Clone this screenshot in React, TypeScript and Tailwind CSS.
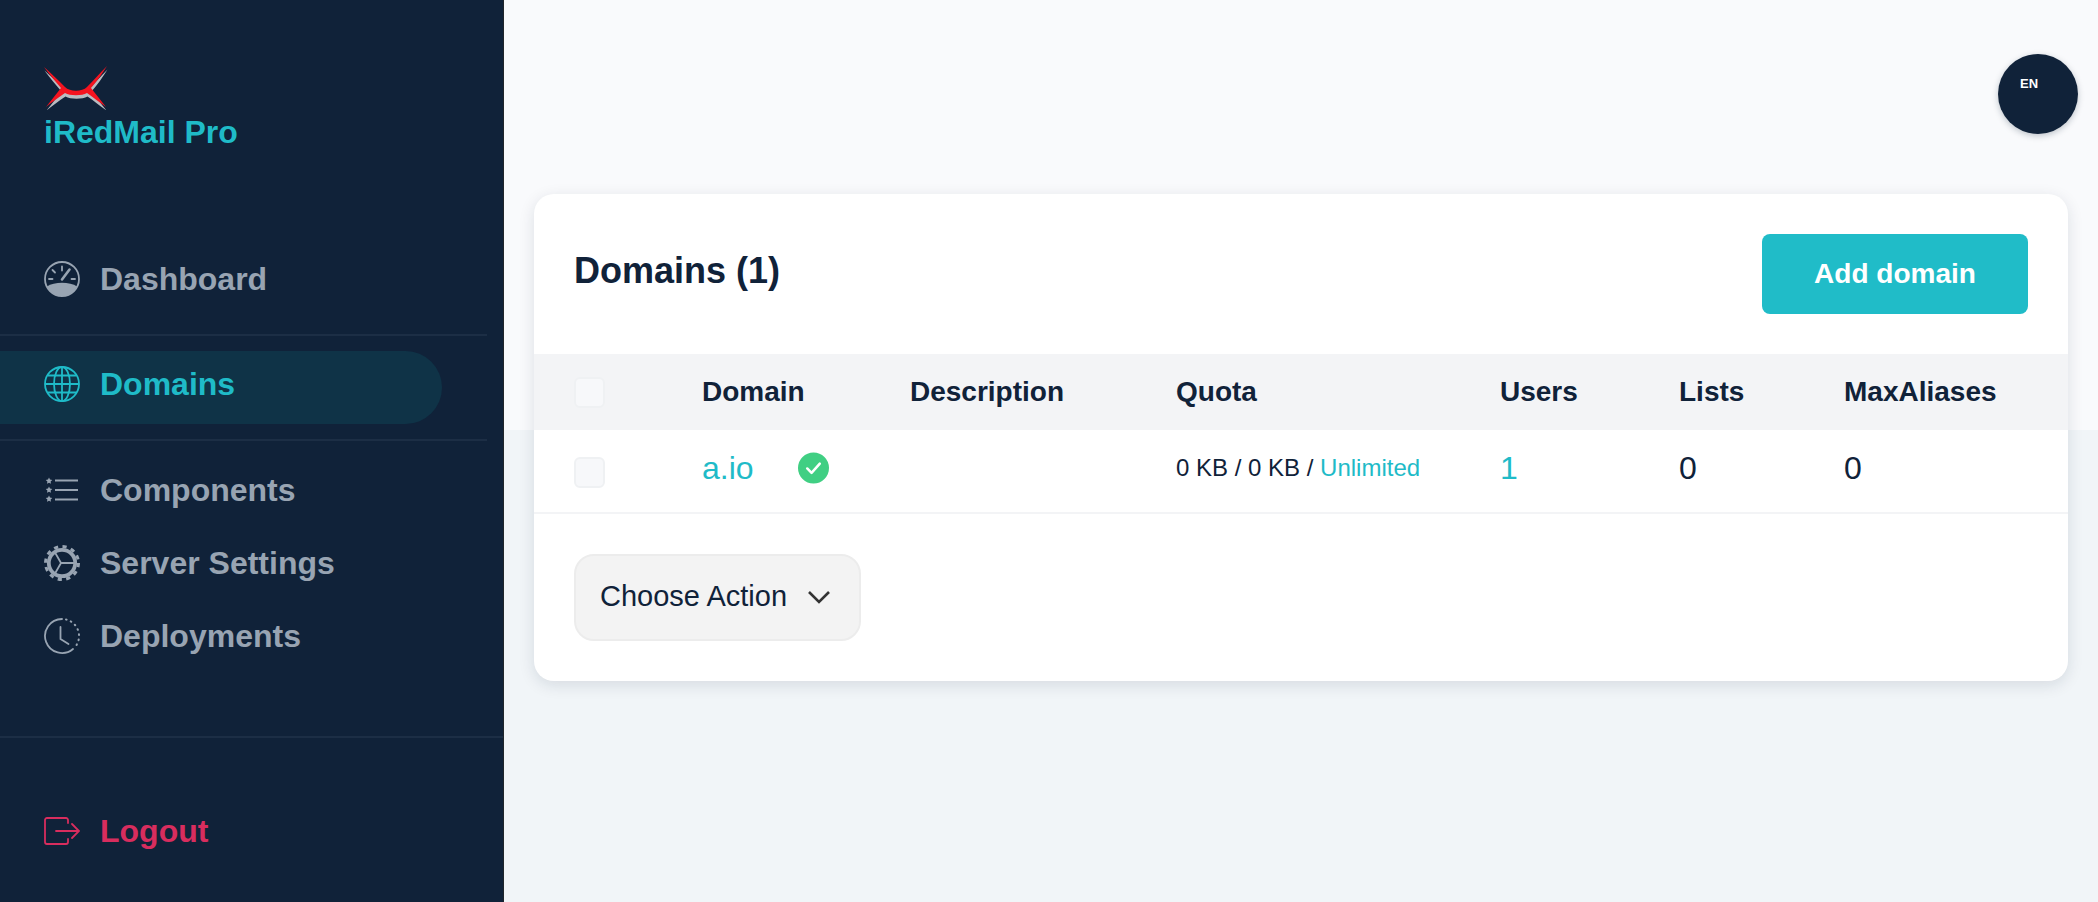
import React from "react";

const logoPath =
  "M0 1C7 7 14 14 21 21C26 26 38 26 43 21C50 14 56 7 63 0C58 8 53 15 47 22C52 28 57 35 62 41C55 36 49 31 43 27C38 30 26 30 21 27C15 31 8 36 2 41C7 35 12 28 17 22C11 15 5 8 0 1Z";

const Logo = () => (
  <svg width="64" height="44" viewBox="0 0 64 44" className="block">
    <path d={logoPath} fill="#b9bbc0" transform="translate(0.5 3.500)" />
    <path d={logoPath} fill="#f5131f" />
  </svg>
);

const GaugeIcon = () => (
  <svg width="36" height="36" viewBox="0 0 36 36" fill="none" stroke="currentColor" strokeWidth="1.8" strokeLinecap="round">
    <circle cx="18" cy="18" r="17" />
    <path d="M3 25.500C10 20.500 26 20.500 33 25.500C30 31.500 24.500 35 18 35C11.500 35 6 31.500 3 25.500Z" fill="currentColor" stroke="none" />
    <path d="M18 5.500v4M8.500 9l2.500 2.500M5 18h3.500M27.500 18H31" />
    <path d="M18 18.500L25.500 8.500" strokeWidth="2.600" />
  </svg>
);

const GlobeIcon = () => (
  <svg width="36" height="36" viewBox="0 0 36 36" fill="none" stroke="currentColor" strokeWidth="1.8">
    <circle cx="18" cy="18" r="17" />
    <ellipse cx="18" cy="18" rx="8" ry="17" />
    <path d="M18 1v34M1 18h34M4 9.500h28M4 26.500h28" />
  </svg>
);

const ListIcon = () => (
  <svg width="36" height="30" viewBox="0 0 36 30" fill="none" stroke="currentColor" strokeWidth="1.800">
    <path d="M11 5.500h23M11 15h23M11 24.500h23" />
    <g fill="currentColor" stroke="none">
      <path d="M5 2.500l1 2.100 2.300.3-1.700 1.600.4 2.300L5 7.700 3 8.800l.4-2.300-1.700-1.600 2.300-.3z" />
      <path d="M5 11.500l1 2.100 2.300.3-1.700 1.600.4 2.300L5 16.700 3 17.800l.4-2.300-1.700-1.600 2.300-.3z" />
      <path d="M5 20.500l1 2.100 2.300.3-1.700 1.600.4 2.300L5 25.700 3 26.800l.4-2.300-1.700-1.600 2.300-.3z" />
    </g>
  </svg>
);

const GearIcon = () => (
  <svg width="36" height="36" viewBox="0 0 36 36" fill="none" stroke="currentColor">
    <circle cx="18" cy="18" r="13.200" strokeWidth="3.800" />
    <circle cx="18" cy="18" r="16.500" strokeWidth="3" strokeDasharray="4.200 4.440" />
    <path d="M17 18L11 7.500M17 18h14M17 18l-6 10.500" strokeWidth="1.800" />
  </svg>
);

const ClockIcon = () => (
  <svg width="36" height="36" viewBox="0 0 36 36" fill="none" stroke="currentColor" strokeWidth="1.800" strokeLinecap="round">
    <path d="M18 1A17 17 0 1 0 29 31" />
    <path d="M22 1.500A17 17 0 0 1 32.500 27" strokeWidth="2" strokeDasharray="0.600 4.600" />
    <path d="M16.500 9v12l8 5" />
  </svg>
);

const LogoutIcon = () => (
  <svg width="36" height="28" viewBox="0 0 36 28" fill="none" stroke="currentColor" strokeWidth="1.800" strokeLinecap="round">
    <path d="M24 6V3a2 2 0 0 0-2-2H3a2 2 0 0 0-2 2v22a2 2 0 0 0 2 2h19a2 2 0 0 0 2-2v-3" />
    <path d="M12 14h23M28 7l7 7-7 7" />
  </svg>
);

const NavItem = ({ icon, label, className }: { icon: React.ReactNode; label: string; className: string }) => (
  <a href="#" className={"flex h-[73px] items-center text-[32px] leading-none font-bold " + className}>
    <span className="flex w-[56px] shrink-0 justify-start">{icon}</span>
    {label}
  </a>
);

const Checkbox = ({ className = "" }: { className?: string }) => (
  <span className={"block h-[31px] w-[31px] rounded-md border-2 border-[#eff1f3] bg-[#f7f8fa] " + className} />
);

const Sidebar = () => (
  <aside className="flex h-[902px] w-[504px] shrink-0 flex-col border-r border-[#20262b] bg-[#102239]">
    <div className="pt-[66px] pl-[44px]">
      <Logo />
      <div className="mt-[2px] text-[32px] leading-[40px] font-bold text-[#1fbbc8]">iRedMail Pro</div>
    </div>
    <div className="mt-[90px] pl-[44px]">
      <NavItem icon={<GaugeIcon />} label="Dashboard" className="text-[#98a4b2]" />
    </div>
    <div className="mt-[19px] h-[2px] w-[487px] bg-[#1c2e45]" />
    <div className="mt-[15px] w-[442px] rounded-r-[37px] bg-[#0f3347] pl-[44px]">
      <NavItem icon={<GlobeIcon />} label="Domains" className="pb-[8px] text-[#1fbbc8]" />
    </div>
    <div className="mt-[15px] h-[2px] w-[487px] bg-[#1c2e45]" />
    <div className="mt-[12px] pl-[44px]">
      <NavItem icon={<ListIcon />} label="Components" className="text-[#98a4b2]" />
      <NavItem icon={<GearIcon />} label="Server Settings" className="text-[#98a4b2]" />
      <NavItem icon={<ClockIcon />} label="Deployments" className="text-[#98a4b2]" />
    </div>
    <div className="mt-[64px] h-[2px] w-full bg-[#1c2e45]" />
    <div className="mt-[56px] pl-[44px]">
      <NavItem icon={<LogoutIcon />} label="Logout" className="text-[#d82d5e]" />
    </div>
  </aside>
);

const rowCols = "grid grid-cols-[128px_208px_266px_324px_179px_165px_1fr] items-center pl-[40px]";

const DomainsCard = () => (
  <section className="mx-[30px] mt-[60px] rounded-[20px] bg-white shadow-[0_4px_16px_rgba(16,34,57,0.12)]">
    <div className="flex h-[160px] items-center justify-between pr-[40px] pl-[40px]">
      <h1 className="mb-[6px] text-[36px] leading-none font-bold text-[#102239]">Domains (1)</h1>
      <button className="h-[80px] w-[266px] rounded-lg bg-[#20bcc8] text-[28px] font-bold text-white">
        Add domain
      </button>
    </div>

    <div className={rowCols + " h-[76px] bg-[#f3f4f6] text-[28px] font-bold text-[#102239]"}>
      <Checkbox />
      <span>Domain</span>
      <span>Description</span>
      <span>Quota</span>
      <span>Users</span>
      <span>Lists</span>
      <span>MaxAliases</span>
    </div>

    <div className={rowCols + " h-[84px] border-b-2 border-[#f3f4f6] pb-[6px] text-[#102239]"}>
      <Checkbox className="mt-[9px]" />
      <div className="flex items-center gap-[44px]">
        <a href="#" className="text-[32px] text-[#1fbbc8]">a.io</a>
        <svg width="31" height="32" viewBox="0 0 32 32" fill="none">
          <circle cx="16" cy="16" r="16" fill="#40cf83" />
          <path d="M9.500 16.500l4.500 4.500 8.500-9.500" stroke="#fff" strokeWidth="2.600" strokeLinecap="round" strokeLinejoin="round" />
        </svg>
      </div>
      <span />
      <span className="text-[24px]">
        0 KB / 0 KB / <a href="#" className="text-[#1fbbc8]">Unlimited</a>
      </span>
      <a href="#" className="text-[32px] text-[#1fbbc8]">1</a>
      <span className="text-[32px]">0</span>
      <span className="text-[32px]">0</span>
    </div>

    <div className="px-[40px] pt-[40px] pb-[40px]">
      <button className="flex h-[87px] w-[287px] items-center rounded-[20px] border-2 border-[#ececec] bg-[#f3f3f3] pb-[2px] pl-[24px] text-[29px] text-[#102239]">
        Choose Action
        <svg width="24" height="14" viewBox="0 0 24 14" fill="none" className="ml-[20px]">
          <path d="M2 2l10 10L22 2" stroke="#333" strokeWidth="2.600" />
        </svg>
      </button>
    </div>
  </section>
);

export default function App() {
  return (
    <div className="flex h-[902px] overflow-hidden font-['Liberation_Sans',Arial,sans-serif]">
      <Sidebar />
      <main className="flex-1 bg-[linear-gradient(#f9fafc_430px,#f1f5f8_430px)]">
        <div className="flex justify-end pt-[54px] pr-[20px]">
          <button className="flex h-[80px] w-[80px] items-start rounded-full bg-[#102239] pt-[22px] pl-[22px] shadow-[0_2px_6px_rgba(16,34,57,0.25)]">
            <span className="block text-[13px] leading-[16px] font-bold text-white">EN</span>
          </button>
        </div>
        <DomainsCard />
      </main>
    </div>
  );
}
